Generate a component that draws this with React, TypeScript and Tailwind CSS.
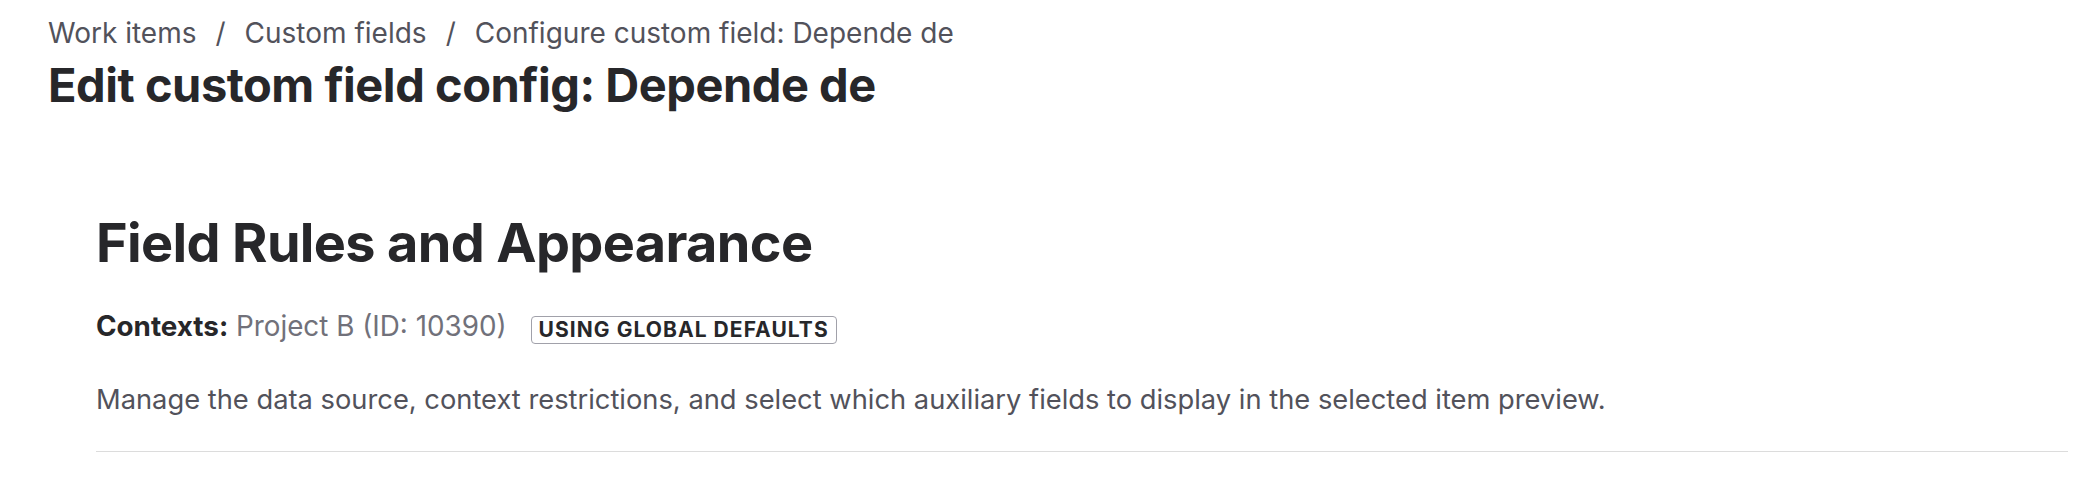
export default function App() {
  const font = { fontFamily: "Inter, 'Noto Sans', sans-serif" };
  return (
    <div className="min-h-[488px] w-full bg-white text-[#27272a]" style={font}>
      <div className="pl-12 pr-[30px] pt-[15px]">
        {/* breadcrumb trail */}
        <nav className="flex items-center gap-[19px] text-[28px] leading-[36px] text-[#52525b]">
          <span>Work items</span>
          <span>/</span>
          <span>Custom fields</span>
          <span>/</span>
          <span>Configure custom field: Depende de</span>
        </nav>
        <h1 className="mt-[6px] text-[47px] font-bold leading-[56px] tracking-[-0.01em] text-[#27272a]">
          Edit custom field config: Depende de
        </h1>

        <section className="ml-12 mt-[100px]">
          <h2 className="text-[54px] font-bold leading-[60px] tracking-[-0.012em] text-[#27272a]">
            Field Rules and Appearance
          </h2>
          <div className="mt-[35px] flex items-center gap-[24px] text-[27.8px] leading-[36px]">
            <p>
              <span className="font-bold text-[#27272a]">Contexts:</span>{" "}
              <span className="text-[#71717a]">Project B (ID: 10390)</span>
            </p>
            <span className="mt-[8px] rounded-[4px] border-[1.5px] border-[#a1a1aa] px-[7px] text-[21px] font-bold leading-[26px] tracking-[0.05em] text-[#27272a]">
              USING GLOBAL DEFAULTS
            </span>
          </div>
          <p className="mt-[38px] text-[27.3px] leading-[36px] text-[#52525b]">
            Manage the data source, context restrictions, and select which auxiliary fields to display in the selected item preview.
          </p>
          <hr className="mt-[33px] border-t-[1.5px] border-[#dcdcdc]" />
        </section>
      </div>
    </div>
  );
}
